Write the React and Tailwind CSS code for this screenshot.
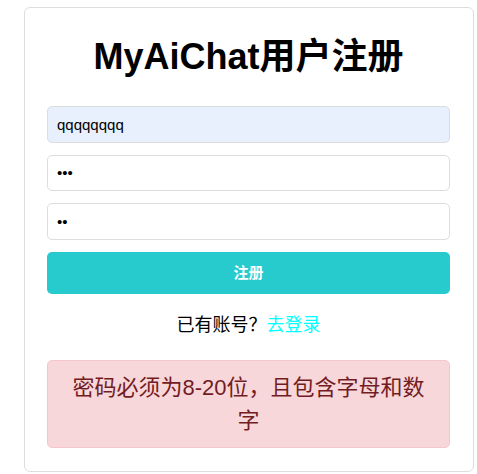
import React from 'react';

const font = { fontFamily: '"Liberation Sans", "Noto Sans CJK SC", sans-serif' };

export default function App() {
  return (
    <div className="min-h-screen bg-white pt-[7px]" style={font}>
      <div className="ml-[24px] w-[450px] rounded-[6px] border border-[#dddddd] bg-white pt-[27px] pb-[23px] pl-[22px] pr-[23px]">
        <h1 className="mb-[28px] text-center text-[36px] font-bold leading-[43px] text-black">MyAiChat用户注册</h1>

        <form className="flex flex-col" onSubmit={(e) => e.preventDefault()}>
          <input
            type="text"
            readOnly
            value="qqqqqqqq"
            className="mb-[12px] h-[36.5px] w-full rounded-[5px] border border-[#dddddd] bg-[#e8f0fe] px-[9px] text-[15px] text-black outline-none"
          />
          <input
            type="password"
            readOnly
            value="123"
            className="mb-[12px] h-[36.5px] w-full rounded-[5px] border border-[#dddddd] bg-white px-[9px] text-[15px] text-black outline-none"
          />
          <input
            type="password"
            readOnly
            value="12"
            className="mb-[12px] h-[36.5px] w-full rounded-[5px] border border-[#dddddd] bg-white px-[9px] text-[15px] text-black outline-none"
          />
          <button
            type="submit"
            className="h-[42.5px] w-full rounded-[5px] bg-[#27cbce] text-[15px] font-bold text-white"
          >
            注册
          </button>
        </form>

        <p className="mt-[18px] text-center text-[18px] leading-[27px] text-black">
          已有账号？<a href="#" className="text-[#00ffff]">去登录</a>
        </p>

        <div className="mt-[21px] rounded-[5px] border border-[#f5c6cb] bg-[#f8d7da] px-[15px] py-[10px] text-center text-[22px] leading-[33px] text-[#721c24]">
          密码必须为8-20位，且包含字母和数字
        </div>
      </div>
    </div>
  );
}
